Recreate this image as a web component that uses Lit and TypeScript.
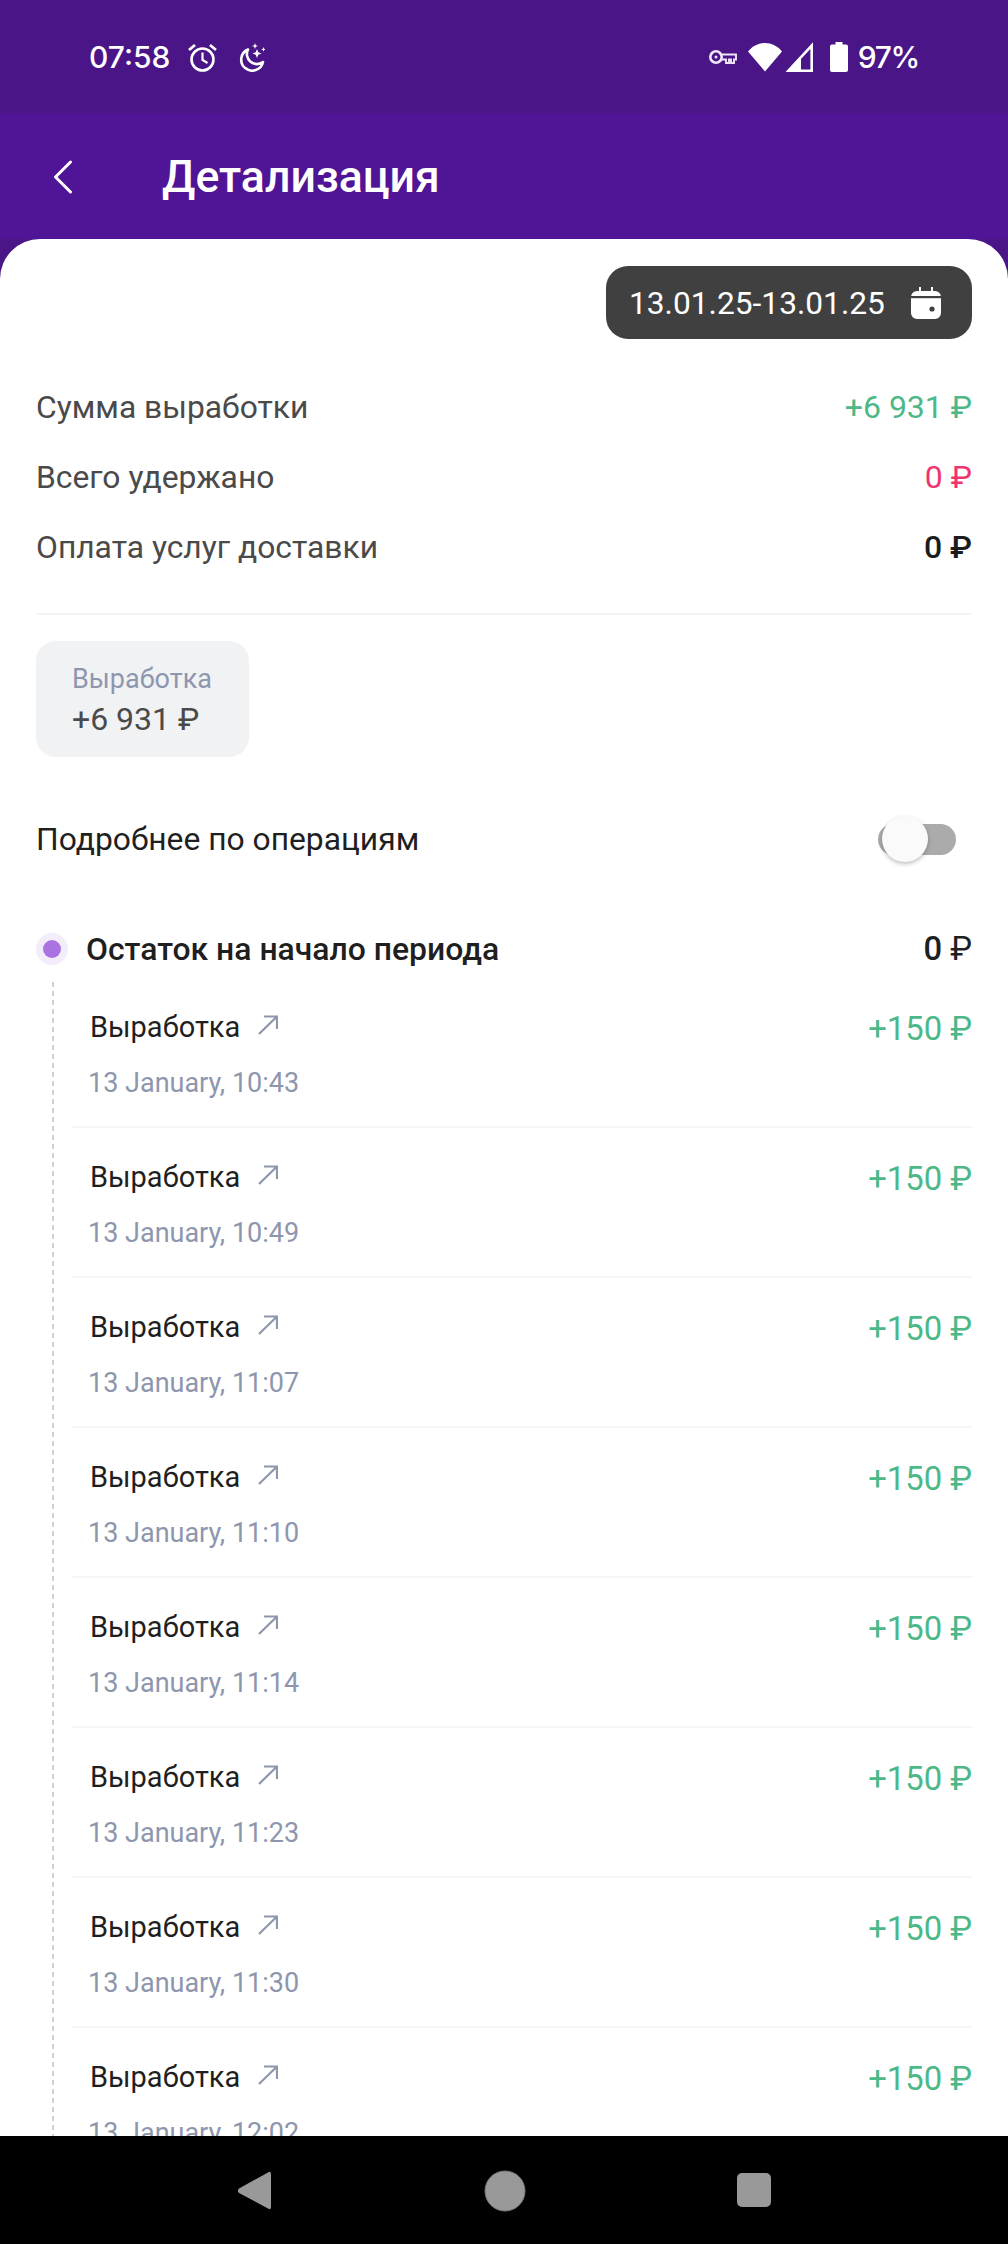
import { LitElement, html, css } from "lit";
import { customElement } from "lit/decorators.js";

const TIMES = ["10:43", "10:49", "11:07", "11:10", "11:14", "11:23", "11:30", "12:02"];

@customElement("app-root")
export class AppRoot extends LitElement {
  static styles = css`
    :host { display: block; width: 1008px; height: 2244px; font-family: Roboto, "Noto Sans", sans-serif; }
    * { box-sizing: border-box; }
    .screen { width: 1008px; height: 2244px; display: flex; flex-direction: column; overflow: hidden; background: #4a1587; }
    .status { height: 113px; flex: none; display: flex; align-items: center; justify-content: space-between; padding: 1px 90px 0 89px; color: #fff; font-family: Inter, Roboto, sans-serif; font-weight: 500; }
    .status-left, .status-right { display: flex; align-items: center; }
    .time { font-size: 30px; line-height: 36px; margin-right: 18px; }
    .pct { font-size: 30px; line-height: 36px; letter-spacing: -1.300px; margin-left: 10px; margin-right: -1px; }
    .status svg { display: block; }
    .alarm { margin-right: 20px; }
    .key { margin-right: 11px; }
    .wifi { margin-right: 4px; }
    .signal { margin-right: 17px; }
    .appbar { height: 126px; flex: none; background: #501496; display: flex; align-items: center; padding: 2px 0 0 52px; color: #fff; }
    .title { font-size: 44.600px; font-weight: 500; margin-left: 88px; }
    .sheet { flex: 1; min-height: 0; overflow: hidden; background: #fff; border-radius: 40px 40px 0 0; padding: 27px 36px 0; }
    .pill-row { display: flex; justify-content: flex-end; }
    .pill { height: 73px; width: 366px; border-radius: 22px; background: #404040; color: #fff; display: flex; align-items: center; justify-content: space-between; padding: 1px 31px 0 23px; font-size: 31.700px; }
    .summary { margin-top: 33px; padding-bottom: 31px; border-bottom: 2px solid #f4f4f5; }
    .sum-row { height: 70px; display: flex; align-items: center; justify-content: space-between; font-size: 31.800px; color: #4a4a4a; }
    .green { color: #4cb888; font-size: 32px; }
    .pink { color: #f0356e; font-size: 32px; }
    .black { color: #1c1c1c; font-weight: 500; font-size: 32px; }
    .tile { margin-top: 26px; width: 213px; height: 116px; border-radius: 20px; background: #f1f2f4; padding: 20px 0 0 36px; }
    .tile-label { font-size: 27px; line-height: 36px; color: #8e96ae; }
    .tile-value { font-size: 32px; line-height: 44px; color: #4a4a4a; }
    .toggle-row { margin-top: 59px; height: 46px; display: flex; align-items: center; justify-content: space-between; font-size: 31.800px; color: #1f1f1f; }
    .toggle { position: relative; width: 78px; height: 46px; margin-right: 16px; }
    .track { position: absolute; left: 0; right: 0; top: 8px; height: 31px; border-radius: 16px; background: #ababab; }
    .thumb { position: absolute; left: 4px; top: 0; width: 46px; height: 46px; border-radius: 50%; background: #fafafa; box-shadow: 0 2px 4px rgba(0,0,0,.25); }
    .head { margin-top: 71px; height: 32px; display: flex; align-items: center; justify-content: space-between; font-size: 31.900px; font-weight: 500; color: #1f1f1f; }
    .head-left { display: flex; align-items: center; gap: 18px; }
    .head-sum { font-size: 32.800px; }
    .dot { width: 32px; height: 32px; border-radius: 50%; background: #f3ecfb; display: flex; align-items: center; justify-content: center; }
    .dot i { display: block; width: 18px; height: 18px; border-radius: 50%; background: #a974e0; }
    .rub { font-weight: 400; }
    .rows { margin-top: 13px; padding: 0 0 0 36px; background-image: repeating-linear-gradient(to bottom, #cdd0d6 0 5px, transparent 5px 9px); background-repeat: no-repeat; background-size: 2px 100%; background-position: 16px 4px; }
    .row { height: 150px; border-bottom: 2px solid #f5f5f6; padding: 29px 0 0 18px; }
    .row-top { display: flex; align-items: center; justify-content: space-between; height: 40px; font-size: 29px; color: #1f1f1f; }
    .row-name { display: flex; align-items: center; gap: 18px; }
    .row-name svg { display: block; margin-top: -4px; }
    .amount { font-size: 32.800px; color: #4cb888; margin-top: 4px; }
    .date { margin-top: 18px; font-size: 27px; line-height: 36px; color: #8e96ae; margin-left: -2px; }
    .nav { height: 108px; flex: none; background: #000; }
    .nav svg { display: block; }
  `;

  private statusIcons() {
    return html`
      <svg class="alarm" width="29" height="29" viewBox="0 0 29 29" fill="none" stroke="#fff">
        <circle cx="14.500" cy="16.500" r="11" stroke-width="2.600"/>
        <path d="M14.500 9.500v7.500l5 3" stroke-width="2.200"/>
        <path d="M1 7 7 2M28 7 22 2" stroke-width="2.800"/>
      </svg>
      <svg width="28" height="29" viewBox="0 0 28 29" fill="none">
        <path d="M11 6.500A11 11 0 1 0 26 19 10 10 0 0 1 11 6.500Z" stroke="#fff" stroke-width="2.600" stroke-linejoin="round"/>
        <path d="M20 6l1.300 3.200 3.200 1.300-3.200 1.300L20 15l-1.300-3.200-3.200-1.300 3.200-1.300Z" fill="#fff"/>
        <path d="M18 0l.8 2.200 2.200.8-2.200.8-.8 2.200-.8-2.200-2.200-.8 2.200-.8Z" fill="#fff"/>
        <path d="M26.500 4l.6 1.800 1.800.6-1.800.6-.6 1.800-.6-1.800-1.800-.6 1.800-.6Z" fill="#fff"/>
      </svg>`;
  }

  private statusRight() {
    return html`
      <svg class="key" width="28" height="16" viewBox="0 0 28 16" fill="none">
        <circle cx="7" cy="8" r="5.700" stroke="#efe6f7" stroke-width="2.600"/>
        <circle cx="7" cy="8" r="1.500" fill="#efe6f7"/>
        <path d="M13 5.500H27V10.500H25V14H22V10.500H20V14H17V10.500H13" stroke="#efe6f7" stroke-width="1.900"/>
      </svg>
      <svg class="wifi" width="34" height="30" viewBox="0 0 34 30">
        <path d="M0 9.500C4.500 4 10.500 1 17 1s12.500 3 17 8.500L17 29.500Z" fill="#fff"/>
      </svg>
      <svg class="signal" width="27" height="30" viewBox="0 0 27 30" fill="none">
        <path d="M2.500 28.700 25.700 3.500V28.700Z" stroke="#fff" stroke-width="2.600"/>
        <path d="M0 30 15 14V30Z" fill="#fff"/>
      </svg>
      <svg width="18" height="30" viewBox="0 0 18 30">
        <path d="M5.500 0h7v2.500H16a2 2 0 0 1 2 2V28a2 2 0 0 1-2 2H2a2 2 0 0 1-2-2V4.500a2 2 0 0 1 2-2h3.500Z" fill="#fff"/>
      </svg>`;
  }

  private arrow() {
    return html`<svg width="20" height="20" viewBox="0 0 20 20" fill="none" stroke="#8e96ae" stroke-width="2.200">
      <path d="M1 19 19 1.500M6 1.500H19V14"/>
    </svg>`;
  }

  private calendar() {
    return html`<svg width="30" height="32" viewBox="0 0 30 32">
      <path d="M8 0h2v4h10V0h2v4h2a6 6 0 0 1 6 6v16a6 6 0 0 1-6 6H6a6 6 0 0 1-6-6V10a6 6 0 0 1 6-6h2Z" fill="#fff"/>
      <rect x="0" y="9" width="30" height="2.200" fill="#404040"/>
      <circle cx="21" cy="22" r="2.600" fill="#404040"/>
    </svg>`;
  }

  render() {
    return html`
      <div class="screen">
        <div class="status">
          <div class="status-left"><span class="time">07:58</span>${this.statusIcons()}</div>
          <div class="status-right">${this.statusRight()}<span class="pct">97%</span></div>
        </div>
        <div class="appbar">
          <svg width="22" height="34" viewBox="0 0 22 34" fill="none" stroke="#fff" stroke-width="3" stroke-linecap="round" stroke-linejoin="round">
            <path d="M18.500 2 3.500 17l15 15"/>
          </svg>
          <div class="title">Детализация</div>
        </div>
        <div class="sheet">
          <div class="pill-row">
            <div class="pill"><span>13.01.25-13.01.25</span>${this.calendar()}</div>
          </div>
          <div class="summary">
            <div class="sum-row"><span>Сумма выработки</span><span class="green">+6 931 ₽</span></div>
            <div class="sum-row"><span>Всего удержано</span><span class="pink">0 ₽</span></div>
            <div class="sum-row"><span>Оплата услуг доставки</span><span class="black">0 ₽</span></div>
          </div>
          <div class="tile">
            <div class="tile-label">Выработка</div>
            <div class="tile-value">+6 931 ₽</div>
          </div>
          <div class="toggle-row">
            <span>Подробнее по операциям</span>
            <div class="toggle"><div class="track"></div><div class="thumb"></div></div>
          </div>
          <div class="head">
            <div class="head-left"><div class="dot"><i></i></div><span>Остаток на начало периода</span></div>
            <span class="head-sum">0 <span class="rub">₽</span></span>
          </div>
          <div class="rows">
            ${TIMES.map((t) => html`
              <div class="row">
                <div class="row-top">
                  <span class="row-name">Выработка ${this.arrow()}</span>
                  <span class="amount">+150 ₽</span>
                </div>
                <div class="date">13 January, ${t}</div>
              </div>`)}
          </div>
        </div>
        <div class="nav">
          <svg width="1008" height="108" viewBox="0 0 1008 108">
            <path d="M268 36.500c2-1.500 3-.5 3 2v32c0 2.500-1 3.500-3 2L239 57c-1.500-1.500-1.500-3 0-4.500Z" fill="#999"/>
            <ellipse cx="505" cy="55" rx="20" ry="20" fill="#999" stroke="#777" stroke-width="1"/>
            <rect x="737" y="37" width="34" height="34" rx="5" fill="#999"/>
          </svg>
        </div>
      </div>`;
  }
}
